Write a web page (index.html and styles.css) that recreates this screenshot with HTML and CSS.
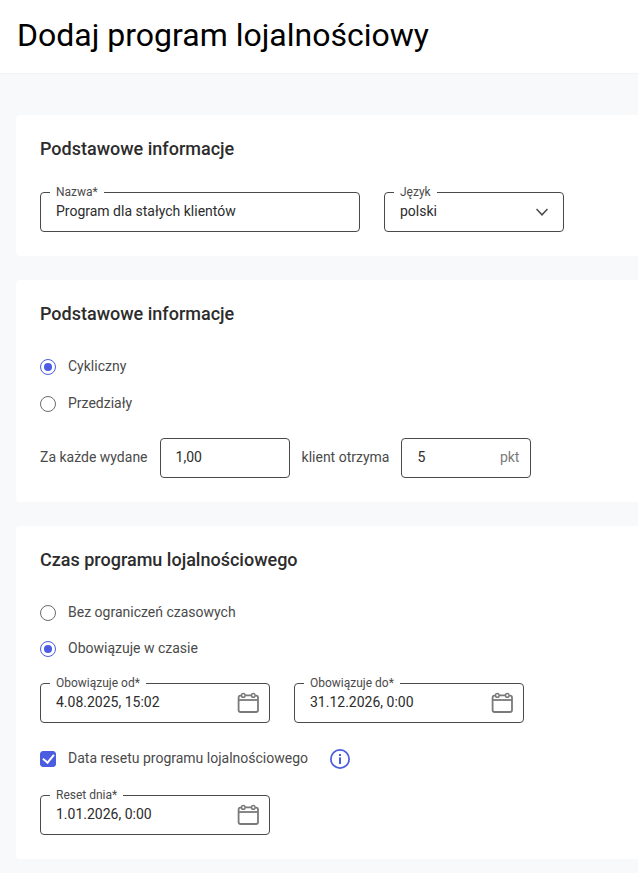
FILE: index.html
```html
<!DOCTYPE html>
<html lang="pl">
<head>
  <meta charset="UTF-8">
  <meta name="viewport" content="width=device-width, initial-scale=1.0">
  <title>Dodaj program lojalnościowy</title>
  <link rel="stylesheet" href="styles.css">
</head>
<body>
  <header class="page-header">
    <h1>Dodaj program lojalnościowy</h1>
  </header>

  <form class="page-content" id="loyaltyForm">
    <section class="card">
      <h2>Podstawowe informacje</h2>
      <div class="field-row">
        <div class="field field-name">
          <label for="name">Nazwa*</label>
          <input type="text" id="name" name="name" value="Program dla stałych klientów" required>
        </div>
        <div class="field field-language">
          <label for="language">Język</label>
          <select id="language" name="language">
            <option selected>polski</option>
          </select>
          <svg class="chevron" viewBox="0 0 12 8" aria-hidden="true">
            <path d="M0.5 1 L6 6.8 L11.5 1"/>
          </svg>
        </div>
      </div>
    </section>

    <section class="card">
      <h2>Podstawowe informacje</h2>
      <div class="options options-type">
        <div class="option">
          <input type="radio" id="typeCyclic" name="type" checked>
          <label for="typeCyclic">Cykliczny</label>
        </div>
        <div class="option">
          <input type="radio" id="typeRanges" name="type">
          <label for="typeRanges">Przedziały</label>
        </div>
      </div>
      <div class="points-row">
        <label for="amount">Za każde wydane</label>
        <div class="field field-number">
          <input type="text" id="amount" name="amount" value="1,00">
        </div>
        <label for="points">klient otrzyma</label>
        <div class="field field-number">
          <input type="text" id="points" name="points" value="5">
          <span class="suffix">pkt</span>
        </div>
      </div>
    </section>

    <section class="card">
      <h2>Czas programu lojalnościowego</h2>
      <div class="options">
        <div class="option">
          <input type="radio" id="timeUnlimited" name="time">
          <label for="timeUnlimited">Bez ograniczeń czasowych</label>
        </div>
        <div class="option">
          <input type="radio" id="timeLimited" name="time" checked>
          <label for="timeLimited">Obowiązuje w czasie</label>
        </div>
      </div>
      <div class="field-row">
        <div class="field field-date">
          <label for="dateFrom">Obowiązuje od*</label>
          <input type="text" id="dateFrom" name="dateFrom" value="4.08.2025, 15:02" required>
          <button type="button" class="icon-button" aria-label="Wybierz datę">
            <svg class="calendar" viewBox="0 0 22 22"><use href="#calendar"/></svg>
          </button>
        </div>
        <div class="field field-date">
          <label for="dateTo">Obowiązuje do*</label>
          <input type="text" id="dateTo" name="dateTo" value="31.12.2026, 0:00" required>
          <button type="button" class="icon-button" aria-label="Wybierz datę">
            <svg class="calendar" viewBox="0 0 22 22"><use href="#calendar"/></svg>
          </button>
        </div>
      </div>
      <div class="option option-reset">
        <input type="checkbox" id="reset" name="reset" checked>
        <label for="reset">Data resetu programu lojalnościowego</label>
        <button type="button" class="icon-button info-button" aria-label="Informacja">
          <svg class="info" viewBox="0 0 20 20">
            <circle class="info-ring" cx="10" cy="10" r="9.1"/>
            <rect x="9" y="5" width="2" height="2"/>
            <rect x="9" y="8.4" width="2" height="6.6"/>
          </svg>
        </button>
      </div>
      <div class="field-row">
        <div class="field field-date">
          <label for="resetDate">Reset dnia*</label>
          <input type="text" id="resetDate" name="resetDate" value="1.01.2026, 0:00" required>
          <button type="button" class="icon-button" aria-label="Wybierz datę">
            <svg class="calendar" viewBox="0 0 22 22"><use href="#calendar"/></svg>
          </button>
        </div>
      </div>
    </section>
  </form>

  <svg class="sprite" aria-hidden="true">
    <symbol id="calendar" viewBox="0 0 22 22">
      <path d="M4.3 3.6 H3.4 Q1.6 3.6 1.6 5.6 V18 Q1.6 20 3.6 20 H19 Q21 20 21 18 V5.6 Q21 3.6 19.2 3.6 H18.2 M8.2 3.4 H14.4"/>
      <path d="M1.6 8 H21"/>
      <circle cx="6.3" cy="3.4" r="1.8"/>
      <circle cx="16.3" cy="3.4" r="1.8"/>
    </symbol>
  </svg>
</body>
</html>
```
FILE: styles.css
```css
* {
  box-sizing: border-box;
}

body {
  margin: 0;
  min-height: 100vh;
  background-color: #f8f9fb;
  color: #4a4a4a;
  font-family: Roboto, "Liberation Sans", sans-serif;
  font-size: 14px;
  line-height: 20px;
}

/* Header */
.page-header {
  background-color: #fff;
  padding: 15px 17px 18px;
  border-bottom: 1px solid #f2f3f5;
}

h1 {
  margin: 0;
  color: #000;
  font-size: 32px;
  font-weight: 400;
  line-height: 40px;
}

/* Cards */
.page-content {
  display: flex;
  flex-direction: column;
  gap: 24px;
  padding: 41px 0 14px 16px;
}

.card {
  background-color: #fff;
  padding: 24px;
  border-radius: 4px 0 0 4px;
}

h2 {
  margin: 0 0 33px;
  color: #2c2c2c;
  font-size: 18px;
  font-weight: 500;
  line-height: 20px;
}

/* Outlined fields */
.field-row {
  display: flex;
  flex-wrap: wrap;
  gap: 24px;
}

.field {
  position: relative;
  display: flex;
  align-items: center;
  height: 40px;
  border: 1px solid #4a4a4a;
  border-radius: 4px;
}

.field-name {
  width: 320px;
}

.field-language {
  width: 180px;
}

.field-number {
  width: 130px;
}

.field-date {
  width: 230px;
}

.field label {
  position: absolute;
  top: -9px;
  left: 9px;
  padding: 0 6px;
  background-color: #fff;
  font-size: 12px;
  line-height: 16px;
}

.field input,
.field select {
  flex: 1;
  min-width: 0;
  height: 100%;
  margin: 0;
  padding: 0 15px 2px;
  border: none;
  outline: none;
  background: none;
  appearance: none;
  color: #2c2c2c;
  font: inherit;
}

.chevron {
  position: absolute;
  right: 15px;
  width: 12px;
  height: 8px;
  fill: none;
  stroke: #4a4a4a;
  stroke-width: 1.5;
  pointer-events: none;
}

.suffix {
  padding: 0 11px 2px 0;
  color: #7a7a7a;
}

/* Radio buttons and checkbox */
.options {
  display: flex;
  flex-direction: column;
  gap: 16px;
  margin-bottom: 24px;
}

.options-type {
  gap: 17px;
}

.option {
  display: flex;
  align-items: center;
  height: 20px;
}

.option label {
  padding: 0 0 2px 12px;
}

.option input {
  display: grid;
  place-items: center;
  flex: none;
  width: 16px;
  height: 16px;
  margin: 0;
  appearance: none;
  background-color: #fff;
  border: 1px solid #6b6b6b;
  border-radius: 50%;
}

.option input:checked {
  border-color: #4a5ce0;
}

.option input[type="radio"]:checked::before {
  content: "";
  width: 8px;
  height: 8px;
  border-radius: 50%;
  background-color: #4a5ce0;
}

.option input[type="checkbox"] {
  border-radius: 3px;
}

.option input[type="checkbox"]:checked {
  background-color: #4a5ce0;
}

.option input[type="checkbox"]:checked::before {
  content: "";
  width: 5px;
  height: 9px;
  margin-bottom: 4px;
  border: solid #fff;
  border-width: 0 2px 2px 0;
  transform: rotate(40deg);
}

.option-reset {
  margin: 26px 0;
}

.points-row {
  display: flex;
  align-items: center;
  gap: 12px;
}

.points-row > label {
  padding-bottom: 2px;
}

/* Icons */
.icon-button {
  display: flex;
  flex: none;
  padding: 0;
  border: none;
  background: none;
  cursor: pointer;
}

.field .icon-button {
  margin-right: 10px;
}

.info-button {
  margin-left: 22px;
}

.calendar {
  width: 22px;
  height: 22px;
}

#calendar {
  fill: none;
  stroke: #7a7a7a;
  stroke-width: 1.8;
}

#calendar circle {
  stroke-width: 1.5;
}

.info {
  width: 20px;
  height: 20px;
  fill: #4a5ce0;
}

.info-ring {
  fill: none;
  stroke: #4a5ce0;
  stroke-width: 1.7;
}

.sprite {
  position: absolute;
  width: 0;
  height: 0;
}
```
